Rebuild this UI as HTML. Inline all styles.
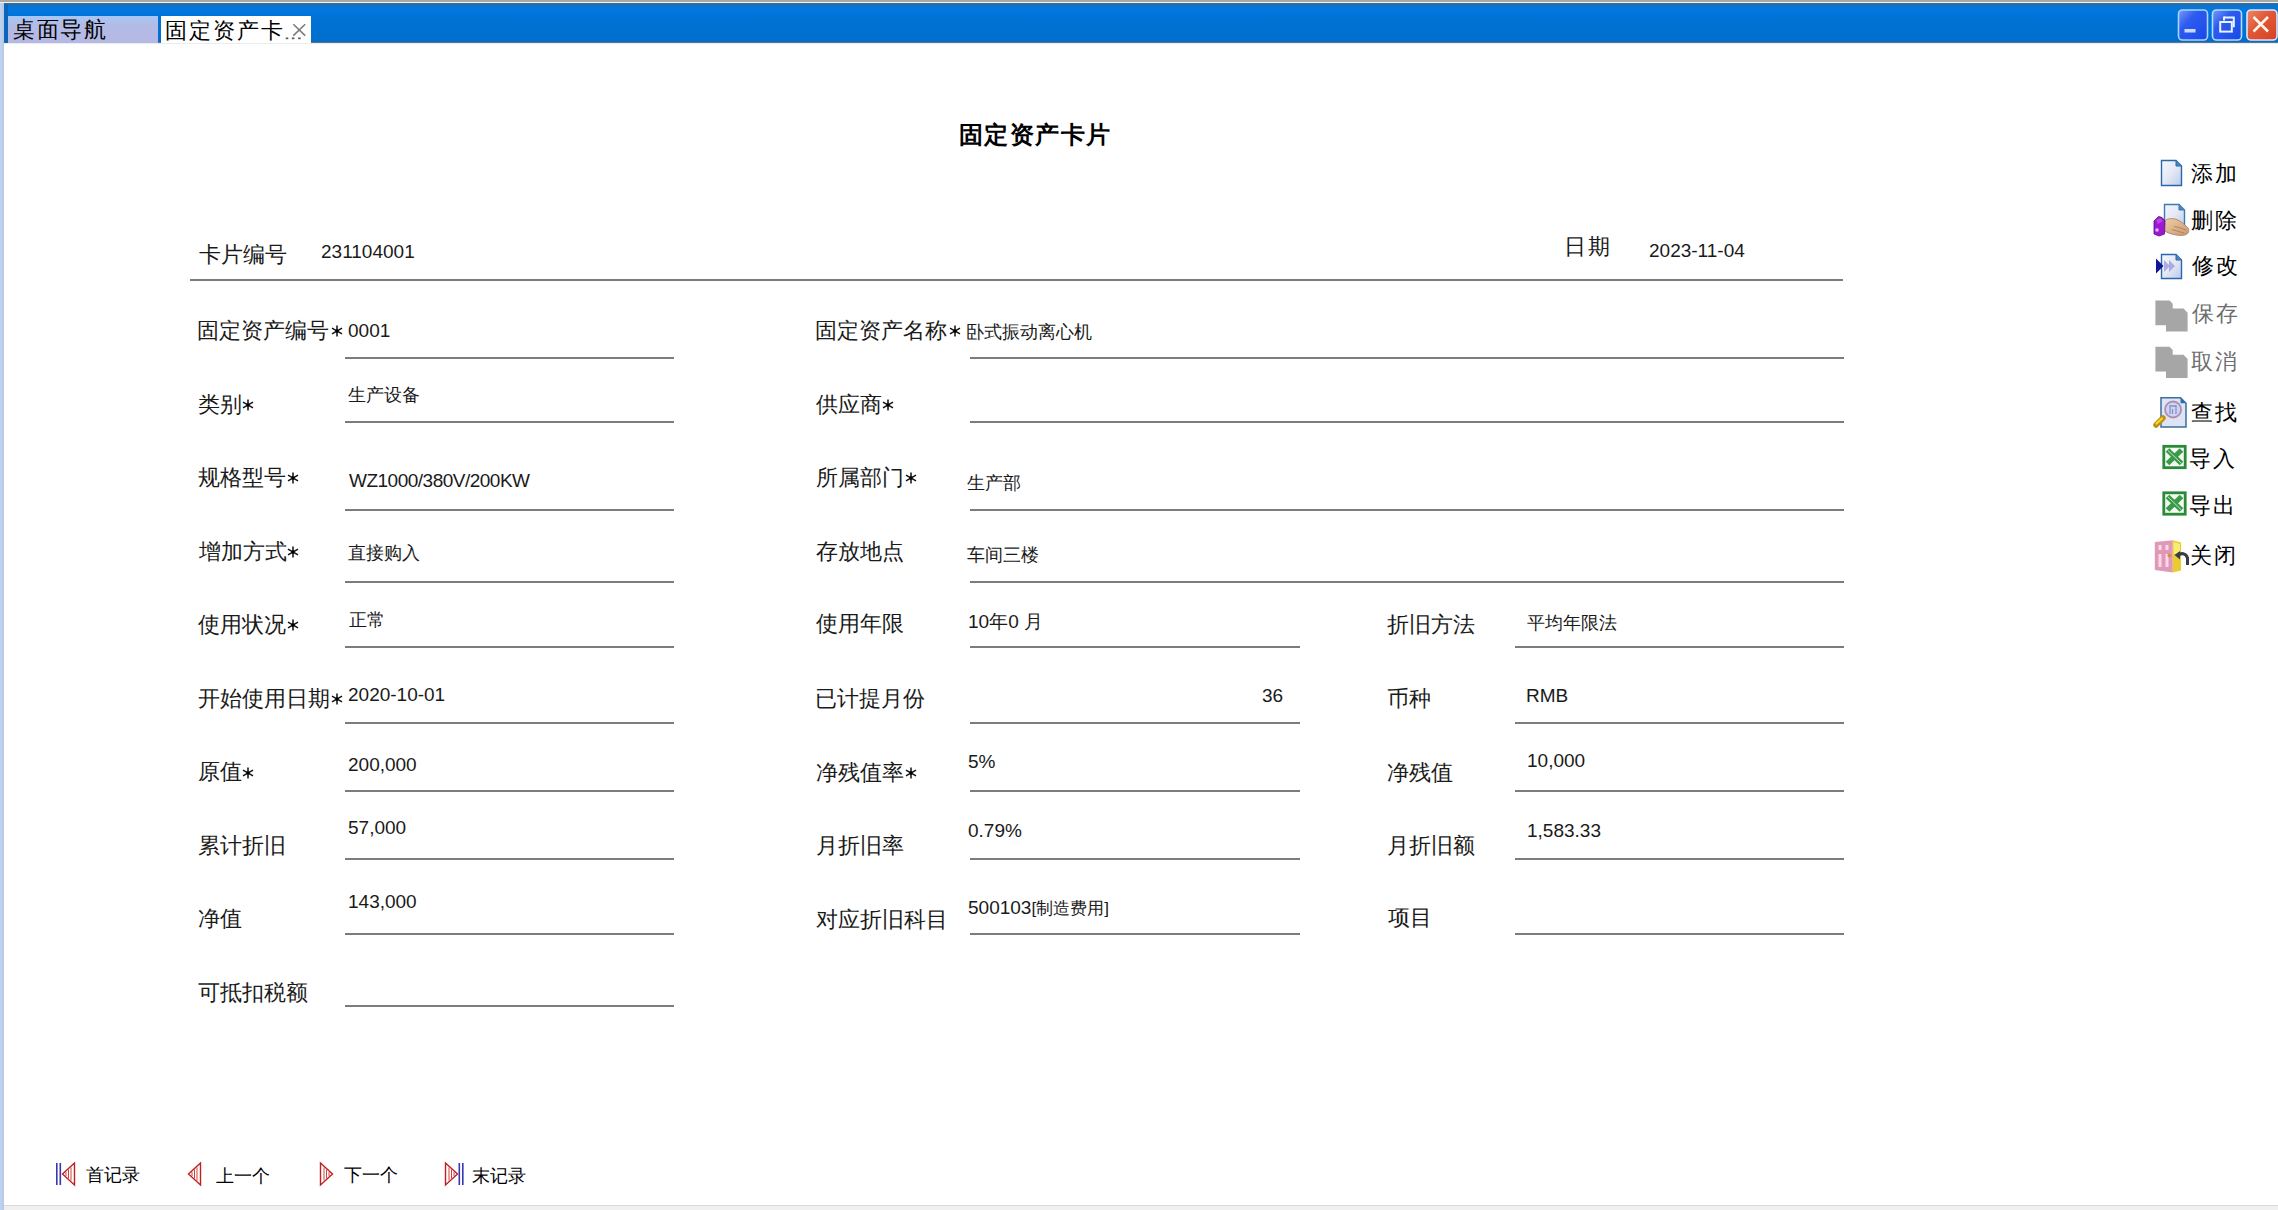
<!DOCTYPE html>
<html><head><meta charset="utf-8"><style>
html,body{margin:0;padding:0;width:2278px;height:1210px;overflow:hidden;background:#fff;position:relative;font-family:"Liberation Sans",sans-serif}
.tx{position:absolute;white-space:nowrap}
.ln{position:absolute}
.ab{position:absolute}
</style></head><body>
<!-- chrome -->
<div class="ab" style="left:0;top:0;width:2278px;height:3px;background:#a9a9a9"></div>
<div class="ab" style="left:0;top:2px;width:2278px;height:1px;background:#f6f2e8"></div>
<div class="ab" style="left:0;top:3px;width:4px;height:1207px;background:#bcd2f0"></div>
<div class="ab" style="left:2px;top:3px;width:2px;height:1207px;background:#b9cbe2"></div>
<div class="ab" style="left:4px;top:3px;width:2274px;height:40px;background:linear-gradient(#4a6e8e 0px,#1a6fb8 1.5px,#0676d8 5px,#0079e2 8.5px,#0073d6 12px,#0070d0 30px,#0070d0 37.5px,#28609a 39px,#7890a8 40px)"></div>
<div class="ab" style="left:4px;top:4px;width:4px;height:39px;background:#0b65b8"></div>
<div class="ab" style="left:8px;top:16px;width:150px;height:27px;background:linear-gradient(#a9c6f6 0px,#aac4f2 3px,#b2bce6 8px,#b6b8e4 27px)"></div>
<div class="ab" style="left:161px;top:16px;width:150px;height:28px;background:#fff"></div>
<div class="ab" style="left:4px;top:43px;width:2274px;height:1px;background:#e8eef0"></div>
<svg class="ab" style="left:284px;top:22px" width="24" height="22" viewBox="0 0 24 22">
 <path d="M9.3 2.2 L21.2 13.6 M21.2 2.2 L9.3 13.6" stroke="#7a7a7a" stroke-width="1.5" fill="none"/>
 <rect x="1.7" y="15.5" width="2.6" height="1.7" fill="#5a5a5a"/><rect x="7.8" y="15.5" width="2.6" height="1.7" fill="#5a5a5a"/><rect x="14.1" y="15.5" width="2.6" height="1.7" fill="#5a5a5a"/>
</svg>
<!-- window buttons -->
<svg class="ab" style="left:2176px;top:8px" width="102" height="34" viewBox="0 0 102 34">
 <defs>
  <linearGradient id="gb" x1="0" y1="0" x2="1" y2="1"><stop offset="0" stop-color="#7a9cf8"/><stop offset="0.35" stop-color="#2e5cf0"/><stop offset="1" stop-color="#1a48e8"/></linearGradient>
  <linearGradient id="gr" x1="0" y1="0" x2="1" y2="1"><stop offset="0" stop-color="#f08868"/><stop offset="0.4" stop-color="#e05a38"/><stop offset="1" stop-color="#d84020"/></linearGradient>
 </defs>
 <rect x="2.5" y="2" width="29" height="30" rx="4" fill="url(#gb)" stroke="#a8d4ff" stroke-width="1.6"/>
 <rect x="8.5" y="21" width="11" height="3.5" fill="#c8d8ff"/>
 <rect x="36.5" y="2" width="29" height="30" rx="4" fill="url(#gb)" stroke="#b0dcff" stroke-width="1.6"/>
 <path d="M48 9.6 H57.8 V19.2" stroke="#e8f4ff" stroke-width="2" fill="none"/>
 <path d="M48 8.6 V12.5" stroke="#e8f4ff" stroke-width="2"/>
 <rect x="44.2" y="14" width="11.6" height="9.6" stroke="#e8f4ff" stroke-width="2" fill="none"/>
 <rect x="71" y="2" width="30" height="30" rx="4" fill="url(#gr)" stroke="#d8e8ff" stroke-width="1.6"/>
 <path d="M77.5 9 L92 23.5 M92 9 L77.5 23.5" stroke="#fff6ee" stroke-width="2.6" fill="none"/>
</svg>
<!-- bottom strip -->
<div class="ab" style="left:4px;top:1205px;width:2274px;height:1px;background:#dadada"></div>
<div class="ab" style="left:4px;top:1206px;width:2274px;height:4px;background:#f0f0f0"></div>
<!-- toolbar icons -->
<svg class="ab" style="left:2150px;top:150px" width="50" height="440" viewBox="0 0 50 440">
 <defs>
  <linearGradient id="doc" x1="0" y1="0" x2="1" y2="1"><stop offset="0" stop-color="#f4f8ff"/><stop offset="0.5" stop-color="#e6e8f4"/><stop offset="1" stop-color="#b8cdee"/></linearGradient>
  <linearGradient id="hand" x1="0" y1="0" x2="1" y2="1"><stop offset="0" stop-color="#f0d0a8"/><stop offset="1" stop-color="#c89870"/></linearGradient>
 </defs>
 <!-- add -->
 <path d="M11.5 10.5 H26 L31.5 16 V35.5 H11.5 Z" fill="url(#doc)" stroke="#2c68a8" stroke-width="1.4"/>
 <path d="M26 10.5 V16 H31.5" fill="#4a84c0" stroke="#2c68a8" stroke-width="1"/>
 <!-- delete -->
 <path d="M14.5 54.5 H29 L34.5 60 V76 H14.5 Z" fill="url(#doc)" stroke="#3c7ab0" stroke-width="1.4"/>
 <path d="M29 54.5 V60 H34.5" fill="#4a84c0" stroke="#3c7ab0" stroke-width="1"/>
 <path d="M13 73 C15 69 20 68 25 69 C29 70 33 73 36 76 C39 78 39.5 81 38 83 C36 85.5 31 86 26 85 C21 84 16 82.5 13.5 80 Z" fill="url(#hand)" stroke="#9a7050" stroke-width="0.7"/>
 <path d="M24 76.5 C28 77 32 78.5 36 80 M22 79.5 C26 80.5 30 82 34 83" stroke="#a87a58" stroke-width="0.8" fill="none"/>
 <path d="M4 71 L8.5 66.5 L12 67.5 L15 71 L14.5 84 L9 86 L4 84 Z" fill="#9a1ad0" stroke="#5a0880" stroke-width="0.8"/>
 <path d="M6 70 L10 68 L13 71 L8 74 Z" fill="#c040f0"/>
 <rect x="5.5" y="78.5" width="3" height="3" fill="#f4b8ff"/>
 <!-- modify -->
 <path d="M11.5 104.5 H26 L31.5 110 V128.5 H11.5 Z" fill="url(#doc)" stroke="#2c68a8" stroke-width="1.4"/>
 <path d="M26 104.5 V110 H31.5" fill="#4a84c0" stroke="#2c68a8" stroke-width="1"/>
 <path d="M6 108.5 L13.5 116 L6 123.5 Z" fill="#10149c"/>
 <path d="M14 110 L20 116 L14 122 Z M19 110 L25 116 L19 122 Z" fill="#a0a0dc" opacity="0.85"/>
 <!-- save (gray) -->
 <path d="M5.4 150.5 H19.5 L22.7 153.7 V158.6 H33.5 L37.6 162.7 V181.5 H16 V175.3 H5.4 Z" fill="#a6a6a6"/>
 <!-- cancel (gray) -->
 <path d="M5.4 196.8 H19.5 L22.7 200 V204.8 H33.5 L37.6 208.9 V228 H16 V221.6 H5.4 Z" fill="#a6a6a6"/>
 <!-- find -->
 <path d="M11 247.8 H30.5 L36 253.3 V277 H11 Z" fill="#dfe4f4" stroke="#3a6e9e" stroke-width="1.5"/>
 <path d="M30.5 247.8 V253.3 H36 Z" fill="#2a70b0"/>
 <circle cx="23.1" cy="259.5" r="8" fill="#d0d4f4" stroke="#a890b0" stroke-width="1.8"/>
 <path d="M20 255 V264 M26 255 V264 M20 256 H26 M22.5 259 V264" stroke="#8890c8" stroke-width="1.3" fill="none"/>
 <path d="M6 275 L13 268" stroke="#c09010" stroke-width="5.5" stroke-linecap="round"/>
 <path d="M6.5 273.5 L12 268.5" stroke="#f8d830" stroke-width="2.2" stroke-linecap="round"/>
 <!-- import excel -->
 <rect x="13.8" y="296.3" width="21.4" height="21.4" fill="#f4fbf4" stroke="#2a8a3a" stroke-width="2.8"/>
 <path d="M17.5 300 L31.5 313.5 M31.5 300 L17.5 313.5" stroke="#3a9a48" stroke-width="5.2"/>
 <path d="M18 300.5 L31 313" stroke="#c8f0c8" stroke-width="0.9"/>
 <!-- export excel -->
 <rect x="13.8" y="342.8" width="21.4" height="21.4" fill="#f4fbf4" stroke="#2a8a3a" stroke-width="2.8"/>
 <path d="M17.5 346.5 L31.5 360.0 M31.5 346.5 L17.5 360.0" stroke="#3a9a48" stroke-width="5.2"/>
 <path d="M18 347.0 L31 359.5" stroke="#c8f0c8" stroke-width="0.9"/>
 <!-- close -->
 <path d="M4.8 392 L22.8 390.3 L22.8 422.4 L4.8 420 Z" fill="#e098b8"/>
 <path d="M22.8 390.3 L31 392.5 L31 420.5 L22.8 422.4 Z" fill="#e8cc30"/>
 <path d="M23.5 392 L30 394 L30 405 L23.5 404 Z" fill="#f6ee70"/>
 <rect x="8.5" y="395" width="3" height="5" fill="#ffd8e8"/><rect x="15.5" y="395" width="3" height="5" fill="#ffd8e8"/>
 <rect x="8.5" y="404" width="3" height="13" fill="#ffd8e8"/><rect x="15.5" y="404" width="3" height="13" fill="#ffd8e8"/>
 <circle cx="19.5" cy="405.5" r="2" fill="#d89040"/>
 <path d="M27.5 405.5 C31 402.5 36 403 37.5 408 L37.5 415" stroke="#3a3a48" stroke-width="3" fill="none"/>
 <path d="M24.5 405 L30 401 L30 409.5 Z" fill="#3a3a48"/>
</svg>
<!-- nav arrows -->
<svg class="ab" style="left:50px;top:1158px" width="420" height="32" viewBox="0 0 420 32">
 <g id="arrowL">
 </g>
 <rect x="6" y="5" width="1.6" height="22" fill="#3838b0"/><rect x="9.5" y="5" width="1.6" height="22" fill="#3838b0"/>
 <path d="M24.5 5 L12.5 16 L24.5 27 Z" fill="#fff" stroke="#c02020" stroke-width="1.4"/>
 <path d="M16 14 V18 M18.5 11.5 V20.5 M21 9.5 V22.5" stroke="#d04040" stroke-width="1"/>
 <path d="M150.5 5 L138.5 16 L150.5 27 Z" fill="#fff" stroke="#c02020" stroke-width="1.4"/>
 <path d="M142 14 V18 M144.5 11.5 V20.5 M147 9.5 V22.5" stroke="#d04040" stroke-width="1"/>
 <path d="M270.5 5 L282.5 16 L270.5 27 Z" fill="#fff" stroke="#c02020" stroke-width="1.4"/>
 <path d="M274 9.5 V22.5 M276.5 11.5 V20.5 M279 14 V18" stroke="#d04040" stroke-width="1"/>
 <path d="M395.5 5 L407.5 16 L395.5 27 Z" fill="#fff" stroke="#c02020" stroke-width="1.4"/>
 <path d="M399 9.5 V22.5 M401.5 11.5 V20.5 M404 14 V18" stroke="#d04040" stroke-width="1"/>
 <rect x="408.5" y="5" width="1.6" height="22" fill="#3838b0"/><rect x="412" y="5" width="1.6" height="22" fill="#3838b0"/>
</svg>

<div class="ln" style="left:190px;top:279px;width:1653px;height:2px;background:#7c7c7c"></div><div class="ln" style="left:345px;top:357px;width:329px;height:2px;background:#7c7c7c"></div><div class="ln" style="left:970px;top:357px;width:874px;height:2px;background:#7c7c7c"></div><div class="ln" style="left:345px;top:421px;width:329px;height:2px;background:#7c7c7c"></div><div class="ln" style="left:970px;top:421px;width:874px;height:2px;background:#7c7c7c"></div><div class="ln" style="left:345px;top:509px;width:329px;height:2px;background:#7c7c7c"></div><div class="ln" style="left:970px;top:509px;width:874px;height:2px;background:#7c7c7c"></div><div class="ln" style="left:345px;top:581px;width:329px;height:2px;background:#7c7c7c"></div><div class="ln" style="left:970px;top:581px;width:874px;height:2px;background:#7c7c7c"></div><div class="ln" style="left:345px;top:646px;width:329px;height:2px;background:#7c7c7c"></div><div class="ln" style="left:970px;top:646px;width:330px;height:2px;background:#7c7c7c"></div><div class="ln" style="left:1515px;top:646px;width:329px;height:2px;background:#7c7c7c"></div><div class="ln" style="left:345px;top:722px;width:329px;height:2px;background:#7c7c7c"></div><div class="ln" style="left:970px;top:722px;width:330px;height:2px;background:#7c7c7c"></div><div class="ln" style="left:1515px;top:722px;width:329px;height:2px;background:#7c7c7c"></div><div class="ln" style="left:345px;top:790px;width:329px;height:2px;background:#7c7c7c"></div><div class="ln" style="left:970px;top:790px;width:330px;height:2px;background:#7c7c7c"></div><div class="ln" style="left:1515px;top:790px;width:329px;height:2px;background:#7c7c7c"></div><div class="ln" style="left:345px;top:858px;width:329px;height:2px;background:#7c7c7c"></div><div class="ln" style="left:970px;top:858px;width:330px;height:2px;background:#7c7c7c"></div><div class="ln" style="left:1515px;top:858px;width:329px;height:2px;background:#7c7c7c"></div><div class="ln" style="left:345px;top:933px;width:329px;height:2px;background:#7c7c7c"></div><div class="ln" style="left:970px;top:933px;width:330px;height:2px;background:#7c7c7c"></div><div class="ln" style="left:1515px;top:933px;width:329px;height:2px;background:#7c7c7c"></div><div class="ln" style="left:345px;top:1005px;width:329px;height:2px;background:#7c7c7c"></div>
<svg class="ab" style="left:331.3px;top:325.0px" width="12" height="12" viewBox="0 0 12 12"><path d="M6 0.5 V11.5 M1 3.2 L11 8.8 M1 8.8 L11 3.2" stroke="#111" stroke-width="1.5"/><circle cx="6" cy="6" r="1.8" fill="#000"/></svg><svg class="ab" style="left:949.3px;top:325.0px" width="12" height="12" viewBox="0 0 12 12"><path d="M6 0.5 V11.5 M1 3.2 L11 8.8 M1 8.8 L11 3.2" stroke="#111" stroke-width="1.5"/><circle cx="6" cy="6" r="1.8" fill="#000"/></svg><svg class="ab" style="left:242.1px;top:398.6px" width="12" height="12" viewBox="0 0 12 12"><path d="M6 0.5 V11.5 M1 3.2 L11 8.8 M1 8.8 L11 3.2" stroke="#111" stroke-width="1.5"/><circle cx="6" cy="6" r="1.8" fill="#000"/></svg><svg class="ab" style="left:882.4px;top:398.6px" width="12" height="12" viewBox="0 0 12 12"><path d="M6 0.5 V11.5 M1 3.2 L11 8.8 M1 8.8 L11 3.2" stroke="#111" stroke-width="1.5"/><circle cx="6" cy="6" r="1.8" fill="#000"/></svg><svg class="ab" style="left:286.7px;top:472.3px" width="12" height="12" viewBox="0 0 12 12"><path d="M6 0.5 V11.5 M1 3.2 L11 8.8 M1 8.8 L11 3.2" stroke="#111" stroke-width="1.5"/><circle cx="6" cy="6" r="1.8" fill="#000"/></svg><svg class="ab" style="left:904.7px;top:472.3px" width="12" height="12" viewBox="0 0 12 12"><path d="M6 0.5 V11.5 M1 3.2 L11 8.8 M1 8.8 L11 3.2" stroke="#111" stroke-width="1.5"/><circle cx="6" cy="6" r="1.8" fill="#000"/></svg><svg class="ab" style="left:286.7px;top:545.8px" width="12" height="12" viewBox="0 0 12 12"><path d="M6 0.5 V11.5 M1 3.2 L11 8.8 M1 8.8 L11 3.2" stroke="#111" stroke-width="1.5"/><circle cx="6" cy="6" r="1.8" fill="#000"/></svg><svg class="ab" style="left:286.7px;top:619.3px" width="12" height="12" viewBox="0 0 12 12"><path d="M6 0.5 V11.5 M1 3.2 L11 8.8 M1 8.8 L11 3.2" stroke="#111" stroke-width="1.5"/><circle cx="6" cy="6" r="1.8" fill="#000"/></svg><svg class="ab" style="left:331.3px;top:693.0px" width="12" height="12" viewBox="0 0 12 12"><path d="M6 0.5 V11.5 M1 3.2 L11 8.8 M1 8.8 L11 3.2" stroke="#111" stroke-width="1.5"/><circle cx="6" cy="6" r="1.8" fill="#000"/></svg><svg class="ab" style="left:242.1px;top:766.6px" width="12" height="12" viewBox="0 0 12 12"><path d="M6 0.5 V11.5 M1 3.2 L11 8.8 M1 8.8 L11 3.2" stroke="#111" stroke-width="1.5"/><circle cx="6" cy="6" r="1.8" fill="#000"/></svg><svg class="ab" style="left:904.7px;top:766.6px" width="12" height="12" viewBox="0 0 12 12"><path d="M6 0.5 V11.5 M1 3.2 L11 8.8 M1 8.8 L11 3.2" stroke="#111" stroke-width="1.5"/><circle cx="6" cy="6" r="1.8" fill="#000"/></svg><div id="title" class="tx" style="left:959.00px;top:123.00px;font-size:24px;line-height:24px;color:#000;font-weight:bold;letter-spacing:1.4px;">固定资产卡片</div><div id="tab1" class="tx" style="left:13.00px;top:18.50px;font-size:22px;line-height:22px;color:#000;font-weight:normal;letter-spacing:1.7px;">桌面导航</div><div id="tab2" class="tx" style="left:165.00px;top:19.50px;font-size:22px;line-height:22px;color:#000;font-weight:normal;letter-spacing:2.0px;">固定资产卡</div><div id="lk" class="tx" style="left:199.00px;top:243.50px;font-size:22px;line-height:22px;color:#1a1a1a;font-weight:normal;">卡片编号</div><div id="vk" class="tx" style="left:321.00px;top:241.50px;font-size:19px;line-height:19px;color:#1a1a1a;font-weight:normal;">231104001</div><div id="ld" class="tx" style="left:1564.00px;top:236.00px;font-size:22px;line-height:22px;color:#1a1a1a;font-weight:normal;letter-spacing:1.5px;">日期</div><div id="vd" class="tx" style="left:1649.00px;top:240.50px;font-size:19px;line-height:19px;color:#1a1a1a;font-weight:normal;">2023-11-04</div><div id="l1_0" class="tx" style="left:197.00px;top:319.50px;font-size:22px;line-height:22px;color:#1a1a1a;font-weight:normal;">固定资产编号</div><div id="l2_0" class="tx" style="left:815.00px;top:319.50px;font-size:22px;line-height:22px;color:#1a1a1a;font-weight:normal;">固定资产名称</div><div id="l1_1" class="tx" style="left:198.00px;top:393.50px;font-size:22px;line-height:22px;color:#1a1a1a;font-weight:normal;">类别</div><div id="l2_1" class="tx" style="left:816.00px;top:393.50px;font-size:22px;line-height:22px;color:#1a1a1a;font-weight:normal;">供应商</div><div id="l1_2" class="tx" style="left:198.00px;top:467.00px;font-size:22px;line-height:22px;color:#1a1a1a;font-weight:normal;">规格型号</div><div id="l2_2" class="tx" style="left:816.00px;top:467.00px;font-size:22px;line-height:22px;color:#1a1a1a;font-weight:normal;">所属部门</div><div id="l1_3" class="tx" style="left:199.00px;top:540.50px;font-size:22px;line-height:22px;color:#1a1a1a;font-weight:normal;">增加方式</div><div id="l2_3" class="tx" style="left:816.00px;top:540.50px;font-size:22px;line-height:22px;color:#1a1a1a;font-weight:normal;">存放地点</div><div id="l1_4" class="tx" style="left:198.00px;top:614.00px;font-size:22px;line-height:22px;color:#1a1a1a;font-weight:normal;">使用状况</div><div id="l2_4" class="tx" style="left:816.00px;top:613.00px;font-size:22px;line-height:22px;color:#1a1a1a;font-weight:normal;">使用年限</div><div id="l3_4" class="tx" style="left:1387.00px;top:614.00px;font-size:22px;line-height:22px;color:#1a1a1a;font-weight:normal;">折旧方法</div><div id="l1_5" class="tx" style="left:198.00px;top:687.50px;font-size:22px;line-height:22px;color:#1a1a1a;font-weight:normal;">开始使用日期</div><div id="l2_5" class="tx" style="left:815.00px;top:687.50px;font-size:22px;line-height:22px;color:#1a1a1a;font-weight:normal;">已计提月份</div><div id="l3_5" class="tx" style="left:1387.00px;top:687.50px;font-size:22px;line-height:22px;color:#1a1a1a;font-weight:normal;">币种</div><div id="l1_6" class="tx" style="left:198.00px;top:760.50px;font-size:22px;line-height:22px;color:#1a1a1a;font-weight:normal;">原值</div><div id="l2_6" class="tx" style="left:816.00px;top:761.50px;font-size:22px;line-height:22px;color:#1a1a1a;font-weight:normal;">净残值率</div><div id="l3_6" class="tx" style="left:1387.00px;top:761.50px;font-size:22px;line-height:22px;color:#1a1a1a;font-weight:normal;">净残值</div><div id="l1_7" class="tx" style="left:198.00px;top:834.50px;font-size:22px;line-height:22px;color:#1a1a1a;font-weight:normal;">累计折旧</div><div id="l2_7" class="tx" style="left:816.00px;top:834.50px;font-size:22px;line-height:22px;color:#1a1a1a;font-weight:normal;">月折旧率</div><div id="l3_7" class="tx" style="left:1387.00px;top:834.50px;font-size:22px;line-height:22px;color:#1a1a1a;font-weight:normal;">月折旧额</div><div id="l1_8" class="tx" style="left:198.00px;top:907.50px;font-size:22px;line-height:22px;color:#1a1a1a;font-weight:normal;">净值</div><div id="l2_8" class="tx" style="left:816.00px;top:908.50px;font-size:22px;line-height:22px;color:#1a1a1a;font-weight:normal;">对应折旧科目</div><div id="l3_8" class="tx" style="left:1388.00px;top:906.50px;font-size:22px;line-height:22px;color:#1a1a1a;font-weight:normal;">项目</div><div id="l1_9" class="tx" style="left:198.00px;top:981.50px;font-size:22px;line-height:22px;color:#1a1a1a;font-weight:normal;">可抵扣税额</div><div id="v1_0" class="tx" style="left:348.00px;top:320.50px;font-size:19px;line-height:19px;color:#1a1a1a;font-weight:normal;">0001</div><div id="v2_0" class="tx" style="left:966.00px;top:322.50px;font-size:18px;line-height:18px;color:#1a1a1a;font-weight:normal;">卧式振动离心机</div><div id="v1_1" class="tx" style="left:348.00px;top:386.00px;font-size:18px;line-height:18px;color:#1a1a1a;font-weight:normal;">生产设备</div><div id="v1_2" class="tx" style="left:349.00px;top:471.00px;font-size:19px;line-height:19px;color:#1a1a1a;font-weight:normal;letter-spacing:-0.5px;">WZ1000/380V/200KW</div><div id="v2_2" class="tx" style="left:967.00px;top:474.00px;font-size:18px;line-height:18px;color:#1a1a1a;font-weight:normal;">生产部</div><div id="v1_3" class="tx" style="left:348.00px;top:544.00px;font-size:18px;line-height:18px;color:#1a1a1a;font-weight:normal;">直接购入</div><div id="v2_3" class="tx" style="left:967.00px;top:545.50px;font-size:18px;line-height:18px;color:#1a1a1a;font-weight:normal;">车间三楼</div><div id="v1_4" class="tx" style="left:349.00px;top:611.00px;font-size:18px;line-height:18px;color:#1a1a1a;font-weight:normal;">正常</div><div id="v2_4" class="tx" style="left:968.00px;top:611.50px;font-size:19px;line-height:19px;color:#1a1a1a;font-weight:normal;">10年0 月</div><div id="v3_4" class="tx" style="left:1527.00px;top:614.00px;font-size:18px;line-height:18px;color:#1a1a1a;font-weight:normal;">平均年限法</div><div id="v1_5" class="tx" style="left:348.00px;top:684.50px;font-size:19px;line-height:19px;color:#1a1a1a;font-weight:normal;">2020-10-01</div><div id="v2_5" class="tx" style="left:1262.00px;top:686.00px;font-size:19px;line-height:19px;color:#1a1a1a;font-weight:normal;">36</div><div id="v3_5" class="tx" style="left:1526.00px;top:685.50px;font-size:19px;line-height:19px;color:#1a1a1a;font-weight:normal;">RMB</div><div id="v1_6" class="tx" style="left:348.00px;top:755.00px;font-size:19px;line-height:19px;color:#1a1a1a;font-weight:normal;">200,000</div><div id="v2_6" class="tx" style="left:968.00px;top:751.50px;font-size:19px;line-height:19px;color:#1a1a1a;font-weight:normal;">5%</div><div id="v3_6" class="tx" style="left:1527.00px;top:751.00px;font-size:19px;line-height:19px;color:#1a1a1a;font-weight:normal;">10,000</div><div id="v1_7" class="tx" style="left:348.00px;top:818.00px;font-size:19px;line-height:19px;color:#1a1a1a;font-weight:normal;">57,000</div><div id="v2_7" class="tx" style="left:968.00px;top:820.50px;font-size:19px;line-height:19px;color:#1a1a1a;font-weight:normal;">0.79%</div><div id="v3_7" class="tx" style="left:1527.00px;top:820.50px;font-size:19px;line-height:19px;color:#1a1a1a;font-weight:normal;">1,583.33</div><div id="v1_8" class="tx" style="left:348.00px;top:892.00px;font-size:19px;line-height:19px;color:#1a1a1a;font-weight:normal;">143,000</div><div id="v2_8" class="tx" style="left:968.00px;top:897.50px;font-size:19px;line-height:19px;color:#1a1a1a;font-weight:normal;">500103<span style="font-size:17px">[制造费用]</span></div><div id="tb0" class="tx" style="left:2191.00px;top:162.50px;font-size:22px;line-height:22px;color:#000;font-weight:normal;letter-spacing:2px;">添加</div><div id="tb1" class="tx" style="left:2191.00px;top:209.50px;font-size:22px;line-height:22px;color:#000;font-weight:normal;letter-spacing:2px;">删除</div><div id="tb2" class="tx" style="left:2192.00px;top:255.00px;font-size:22px;line-height:22px;color:#000;font-weight:normal;letter-spacing:2px;">修改</div><div id="tb3" class="tx" style="left:2192.00px;top:302.50px;font-size:22px;line-height:22px;color:#6e6e6e;font-weight:normal;letter-spacing:2px;">保存</div><div id="tb4" class="tx" style="left:2191.00px;top:351.00px;font-size:22px;line-height:22px;color:#6e6e6e;font-weight:normal;letter-spacing:2px;">取消</div><div id="tb5" class="tx" style="left:2191.00px;top:401.50px;font-size:22px;line-height:22px;color:#000;font-weight:normal;letter-spacing:2px;">查找</div><div id="tb6" class="tx" style="left:2188.50px;top:447.50px;font-size:22px;line-height:22px;color:#000;font-weight:normal;letter-spacing:2px;">导入</div><div id="tb7" class="tx" style="left:2188.50px;top:494.50px;font-size:22px;line-height:22px;color:#000;font-weight:normal;letter-spacing:2px;">导出</div><div id="tb8" class="tx" style="left:2190.00px;top:545.00px;font-size:22px;line-height:22px;color:#000;font-weight:normal;letter-spacing:2px;">关闭</div><div id="n1" class="tx" style="left:86.00px;top:1166.00px;font-size:18px;line-height:18px;color:#000;font-weight:normal;">首记录</div><div id="n2" class="tx" style="left:216.00px;top:1167.00px;font-size:18px;line-height:18px;color:#000;font-weight:normal;">上一个</div><div id="n3" class="tx" style="left:344.00px;top:1166.00px;font-size:18px;line-height:18px;color:#000;font-weight:normal;">下一个</div><div id="n4" class="tx" style="left:472.00px;top:1167.00px;font-size:18px;line-height:18px;color:#000;font-weight:normal;">末记录</div>
</body></html>
